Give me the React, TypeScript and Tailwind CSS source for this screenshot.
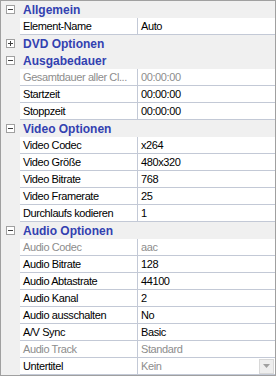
import React from 'react';

type Prop = { name: string; value: string; disabled?: boolean; dropdown?: boolean };
type Group = { title: string; open: boolean; items: Prop[] };

const groups: Group[] = [
    { title: 'Allgemein', open: true, items: [{ name: 'Element-Name', value: 'Auto' }] },
    { title: 'DVD Optionen', open: false, items: [] },
    {
        title: 'Ausgabedauer',
        open: true,
        items: [
            { name: 'Gesamtdauer aller Cl...', value: '00:00:00', disabled: true },
            { name: 'Startzeit', value: '00:00:00' },
            { name: 'Stoppzeit', value: '00:00:00' },
        ],
    },
    {
        title: 'Video Optionen',
        open: true,
        items: [
            { name: 'Video Codec', value: 'x264' },
            { name: 'Video Größe', value: '480x320' },
            { name: 'Video Bitrate', value: '768' },
            { name: 'Video Framerate', value: '25' },
            { name: 'Durchlaufs kodieren', value: '1' },
        ],
    },
    {
        title: 'Audio Optionen',
        open: true,
        items: [
            { name: 'Audio Codec', value: 'aac', disabled: true },
            { name: 'Audio Bitrate', value: '128' },
            { name: 'Audio Abtastrate', value: '44100' },
            { name: 'Audio Kanal', value: '2' },
            { name: 'Audio ausschalten', value: 'No' },
            { name: 'A/V Sync', value: 'Basic' },
            { name: 'Audio Track', value: 'Standard', disabled: true },
            { name: 'Untertitel', value: 'Kein', dropdown: true },
        ],
    },
];

const Toggle: React.FC<{ open: boolean }> = ({ open }) => (
    <div className="w-[9px] h-[9px] border border-[#a0a0a0] bg-white flex items-center justify-center relative">
        <div className="w-[5px] h-px bg-[#404040]" />
        {!open && <div className="absolute w-px h-[5px] bg-[#404040]" />}
    </div>
);

export default function App() {
    return (
        <div
            className="w-[276px] h-[376px] border border-[#a0a0a0] bg-[#f0f0f0] overflow-hidden text-[11px] leading-none tracking-[-0.4px] text-black"
            style={{ fontFamily: '"Liberation Sans", Arial, sans-serif' }}
        >
            {groups.map(g => (
                <div key={g.title}>
                    <div className="h-[17px] flex items-center">
                        <div className="w-[19px] flex justify-center">
                            <Toggle open={g.open} />
                        </div>
                        <span className="pl-[3px] text-[12px] tracking-normal font-bold text-[#3341b0]">{g.title}</span>
                    </div>
                    {g.open && g.items.map(p => (
                        <div key={p.name} className="h-[17px] flex">
                            <div className="w-[19px] shrink-0" />
                            <div
                                className={`w-[118px] shrink-0 bg-white border-b border-r border-[#c3c9d6] pl-[3px] flex items-center whitespace-nowrap overflow-hidden ${p.disabled ? 'text-[#8d8d8d]' : ''}`}
                            >
                                {p.name}
                            </div>
                            <div
                                className={`flex-1 bg-white border-b border-[#c3c9d6] pl-[3px] flex items-center ${p.disabled || p.dropdown ? 'text-[#8d8d8d]' : ''}`}
                            >
                                <span className="flex-1">{p.value}</span>
                                {p.dropdown && (
                                    <div className="w-[15px] h-[15px] mr-px bg-[#eeeeee] border border-[#d8d8d8] flex items-center justify-center">
                                        <svg width="7" height="4" viewBox="0 0 7 4">
                                            <path d="M0 0h7L3.5 4z" fill="#a0a0a0" />
                                        </svg>
                                    </div>
                                )}
                            </div>
                        </div>
                    ))}
                </div>
            ))}
        </div>
    );
}
